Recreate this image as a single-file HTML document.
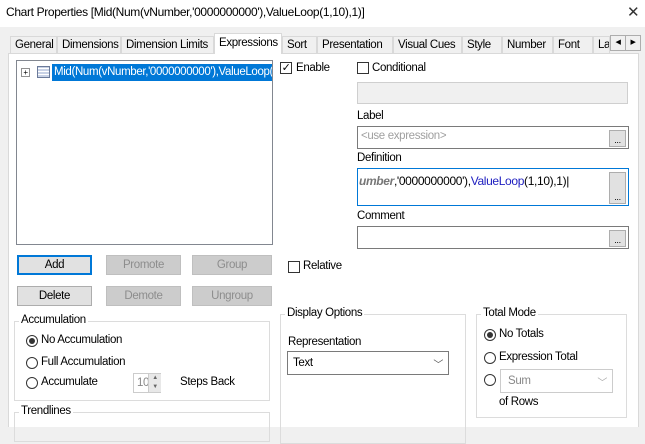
<html><head><style>
body{margin:0;width:645px;height:426px;overflow:hidden;background:#f0f0f0;font-family:"Liberation Sans",sans-serif;font-size:11.5px;letter-spacing:-0.35px;color:#000;position:relative}
.a{position:absolute;white-space:nowrap}
.tab{position:absolute;top:36px;height:17px;line-height:17px;border:1px solid #d9d9d9;border-bottom:none;background:#f0f0f0;padding:0 4px;box-sizing:border-box;white-space:nowrap;overflow:hidden}
.box{position:absolute;background:#fff;border:1px solid #7a7a7a;box-sizing:border-box}
.dot{position:absolute;width:17px;height:17px;right:2px;top:3px;background:#e1e1e1;border:1px solid #adadad;box-sizing:border-box;font-size:9px;text-align:center;line-height:18px}
.cb{position:absolute;width:12px;height:12px;border:1px solid #333;background:#fff;box-sizing:border-box}
.btn{position:absolute;height:20px;line-height:18px;text-align:center;border:1px solid #adadad;background:#e1e1e1;box-sizing:border-box}
.dis{background:#cccccc;border-color:#bfbfbf;color:#8d8d8d}
.grp{position:absolute;border:1px solid #dcdcdc;box-sizing:border-box}
.gl{position:absolute;top:-8px;left:4px;background:#fff;padding:0 2px;white-space:nowrap}
.rd{position:absolute;width:12px;height:12px;border:1px solid #333;border-radius:50%;background:#fff;box-sizing:border-box}
</style></head><body>
<div class="a" style="left:0;top:0;width:645px;height:27px;background:#fff"></div>
<div class="a" style="left:6px;top:5px;font-size:12px">Chart Properties [Mid(Num(vNumber,'0000000000'),ValueLoop(1,10),1)]</div>
<div class="a" style="left:627px;top:3px;font-size:15px;color:#333">✕</div>
<div class="a" style="left:8px;top:53px;width:629px;height:373px;background:#fff;border:1px solid #d9d9d9;border-bottom:none"></div>
<div class="tab" style="left:10px;width:47px">General</div>
<div class="tab" style="left:57px;width:64px">Dimensions</div>
<div class="tab" style="left:121px;width:93px">Dimension Limits</div>
<div class="tab" style="left:214px;top:33px;height:21px;width:68px;background:#fff;line-height:18px;z-index:2">Expressions</div>
<div class="tab" style="left:282px;width:35px">Sort</div>
<div class="tab" style="left:317px;width:76px">Presentation</div>
<div class="tab" style="left:393px;width:69px">Visual Cues</div>
<div class="tab" style="left:462px;width:40px">Style</div>
<div class="tab" style="left:502px;width:51px">Number</div>
<div class="tab" style="left:553px;width:40px">Font</div>
<div class="tab" style="left:593px;width:17px">La</div>
<div class="a" style="left:610px;top:35px;width:14px;height:14px;border:1px solid #adadad;background:#f0f0f0;font-size:7px;text-align:center;line-height:14px">◀</div>
<div class="a" style="left:625px;top:35px;width:14px;height:14px;border:1px solid #adadad;background:#f0f0f0;font-size:7px;text-align:center;line-height:14px">▶</div>

<div class="box" style="left:16px;top:60px;width:257px;height:185px;border-color:#828790"></div>
<div class="a" style="left:21px;top:68px;width:7px;height:7px;border:1px solid #919191;font-size:8px;line-height:7px;text-align:center">+</div>
<div class="a" style="left:37px;top:66px;width:11px;height:10px;border:1px solid #6b7a99;background:repeating-linear-gradient(0deg,#c8d2e6 0 2px,#fff 2px 3px)"></div>
<div class="a" style="left:52px;top:64px;width:218px;height:17px;background:#0078d7;color:#fff;line-height:17px;padding-left:2px;overflow:hidden">Mid(Num(vNumber,'0000000000'),ValueLoop(1,10),1)</div>

<div class="cb" style="left:280px;top:62px;font-size:11px;line-height:10px;text-align:center">✓</div>
<div class="a" style="left:296px;top:62px">Enable</div>
<div class="cb" style="left:357px;top:62px"></div>
<div class="a" style="left:372px;top:62px">Conditional</div>
<div class="a" style="left:357px;top:82px;width:271px;height:22px;background:#f0f0f0;border:1px solid #cfcfcf;box-sizing:border-box"></div>
<div class="a" style="left:357px;top:110px">Label</div>
<div class="box" style="left:357px;top:126px;width:272px;height:23px"><span class="a" style="left:3px;top:3px;color:#a0a0a0">&lt;use expression&gt;</span><div class="dot">...</div></div>
<div class="a" style="left:357px;top:152px">Definition</div>
<div class="box" style="left:357px;top:168px;width:272px;height:38px;border-color:#0078d7"><span class="a" style="left:1px;top:5px;font-size:12px"><i style="color:#777;font-weight:bold">umber</i>,'0000000000'),<span style="color:#2020c0">ValueLoop</span>(1,10),1)|</span><div class="dot" style="height:32px;line-height:48px">...</div></div>
<div class="a" style="left:357px;top:210px">Comment</div>
<div class="box" style="left:357px;top:226px;width:272px;height:23px"><div class="dot">...</div></div>
<div class="cb" style="left:288px;top:261px"></div>
<div class="a" style="left:303px;top:260px">Relative</div>

<div class="btn" style="left:17px;top:255px;width:75px;border:2px solid #0078d7;line-height:16px">Add</div>
<div class="btn dis" style="left:106px;top:255px;width:75px">Promote</div>
<div class="btn dis" style="left:192px;top:255px;width:80px">Group</div>
<div class="btn" style="left:17px;top:286px;width:75px">Delete</div>
<div class="btn dis" style="left:106px;top:286px;width:75px">Demote</div>
<div class="btn dis" style="left:192px;top:286px;width:80px">Ungroup</div>

<div class="grp" style="left:14px;top:321px;width:256px;height:80px"><span class="gl">Accumulation</span></div>
<div class="rd" style="left:26px;top:335px"><div class="a" style="left:2px;top:2px;width:6px;height:6px;border-radius:50%;background:#333"></div></div>
<div class="a" style="left:41px;top:334px">No Accumulation</div>
<div class="rd" style="left:26px;top:357px"></div><div class="a" style="left:41px;top:356px">Full Accumulation</div>
<div class="rd" style="left:26px;top:377px"></div><div class="a" style="left:41px;top:376px">Accumulate</div>
<div class="a" style="left:133px;top:373px;width:28px;height:20px;border:1px solid #ccc;background:#fff;box-sizing:border-box;color:#888;padding:3px 0 0 3px">10</div>
<div class="a" style="left:148px;top:374px;width:12px;height:18px;background:#e8e8e8;border-left:1px solid #ccc;font-size:6px;color:#666;text-align:center;line-height:9px">▲<br>▼</div>
<div class="a" style="left:180px;top:376px">Steps Back</div>
<div class="grp" style="left:14px;top:412px;width:256px;height:30px"><span class="gl">Trendlines</span></div>

<div class="grp" style="left:280px;top:314px;width:186px;height:130px"><span class="gl">Display Options</span></div>
<div class="a" style="left:288px;top:336px">Representation</div>
<div class="a" style="left:287px;top:351px;width:162px;height:24px;border:1px solid #7a7a7a;background:#fff;box-sizing:border-box;padding:5px 0 0 5px">Text<span class="a" style="right:5px;top:4px;font-size:10px;color:#555">﹀</span></div>

<div class="grp" style="left:476px;top:314px;width:151px;height:104px"><span class="gl">Total Mode</span></div>
<div class="rd" style="left:484px;top:329px"><div class="a" style="left:2px;top:2px;width:6px;height:6px;border-radius:50%;background:#333"></div></div>
<div class="a" style="left:499px;top:328px">No Totals</div>
<div class="rd" style="left:484px;top:352px"></div><div class="a" style="left:499px;top:351px">Expression Total</div>
<div class="rd" style="left:484px;top:374px"></div>
<div class="a" style="left:500px;top:369px;width:113px;height:24px;border:1px solid #ccc;background:#fff;box-sizing:border-box;padding:5px 0 0 7px;color:#888">Sum<span class="a" style="right:5px;top:4px;font-size:10px;color:#aaa">﹀</span></div>
<div class="a" style="left:499px;top:396px">of Rows</div>
</body></html>
